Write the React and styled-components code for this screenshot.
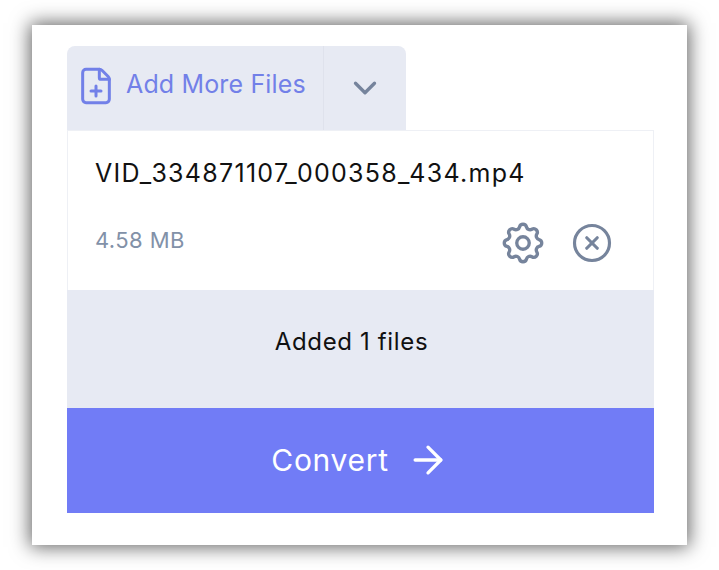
import React from "react";
import styled, { createGlobalStyle } from "styled-components";
import { ChevronDown, FilePlus, CircleX, ArrowRight } from "lucide-react";
import { HiOutlineCog } from "react-icons/hi";

const GlobalStyle = createGlobalStyle`
  html, body {
    margin: 0;
    background: #fff;
  }
  body {
    font-family: Inter, "Noto Sans", sans-serif;
  }
`;

const Page = styled.div`
  width: 719px;
  height: 570px;
  padding: 25px 32px;
  box-sizing: border-box;
  overflow: hidden;
`;

const Card = styled.div`
  width: 655px;
  height: 520px;
  padding: 21px 33px 32px 35px;
  box-sizing: border-box;
  display: flex;
  flex-direction: column;
  background: #fff;
  box-shadow: 0 0 18px 2px rgba(0, 0, 0, 0.62);
`;

const Tabs = styled.div`
  display: flex;
  width: 339px;
  height: 84px;
  background: #e7eaf3;
  border-radius: 8px 8px 0 0;
`;

const AddButton = styled.div`
  width: 257px;
  padding-left: 9px;
  box-sizing: border-box;
  display: flex;
  align-items: center;
  gap: 10px;
  color: #7280e8;
  border-right: 1px solid #dfe2ec;
`;

const AddLabel = styled.span`
  margin-bottom: 9px;
  font-size: 25px;
  letter-spacing: 0.15px;
`;

const AddIcon = styled(FilePlus)`
  margin-bottom: 4px;
`;

const ArrowTab = styled.div`
  flex: 1;
  display: flex;
  align-items: center;
  justify-content: center;
  color: #76849c;
`;

const FileItem = styled.div`
  height: 160px;
  padding: 22px 40px 0 27px;
  box-sizing: border-box;
  border: 1px solid #eef0f5;
  border-bottom: 0;
  display: flex;
  flex-direction: column;
`;

const FileName = styled.div`
  font-size: 25px;
  line-height: 40px;
  letter-spacing: 1.28px;
  color: #111;
`;

const FileMeta = styled.div`
  margin-top: 25px;
  display: flex;
  align-items: center;
  justify-content: space-between;
`;

const FileSize = styled.div`
  margin-bottom: 6px;
  font-size: 22px;
  letter-spacing: 0.4px;
  color: #8291a8;
`;

const Actions = styled.div`
  display: flex;
  align-items: center;
  gap: 23px;
  color: #76849c;
`;

const GearIcon = styled(HiOutlineCog)`
  width: 50px;
  height: 50px;

  path {
    stroke-width: 1.6;
  }
`;

const Status = styled.div`
  height: 118px;
  padding: 0 18px 16px 0;
  box-sizing: border-box;
  display: flex;
  align-items: center;
  justify-content: center;
  background: #e7eaf3;
  font-size: 24px;
  letter-spacing: 0.65px;
  color: #111;
`;

const ConvertButton = styled.div`
  height: 105px;
  padding-bottom: 2px;
  box-sizing: border-box;
  display: flex;
  align-items: center;
  justify-content: center;
  gap: 17px;
  background: #717cf6;
  color: #fff;
  font-size: 30px;
  letter-spacing: 0.7px;
`;

export default function App() {
  return (
    <Page>
      <GlobalStyle />
      <Card>
        <Tabs>
          <AddButton>
            <AddIcon size={40} strokeWidth={1.8} />
            <AddLabel>Add More Files</AddLabel>
          </AddButton>
          <ArrowTab>
            <ChevronDown size={38} strokeWidth={2.1} />
          </ArrowTab>
        </Tabs>
        <FileItem>
          <FileName>VID_334871107_000358_434.mp4</FileName>
          <FileMeta>
            <FileSize>4.58 MB</FileSize>
            <Actions>
              <GearIcon />
              <CircleX size={42} strokeWidth={1.8} />
            </Actions>
          </FileMeta>
        </FileItem>
        <Status>Added 1 files</Status>
        <ConvertButton>
          Convert
          <ArrowRight size={44} strokeWidth={1.8} />
        </ConvertButton>
      </Card>
    </Page>
  );
}
